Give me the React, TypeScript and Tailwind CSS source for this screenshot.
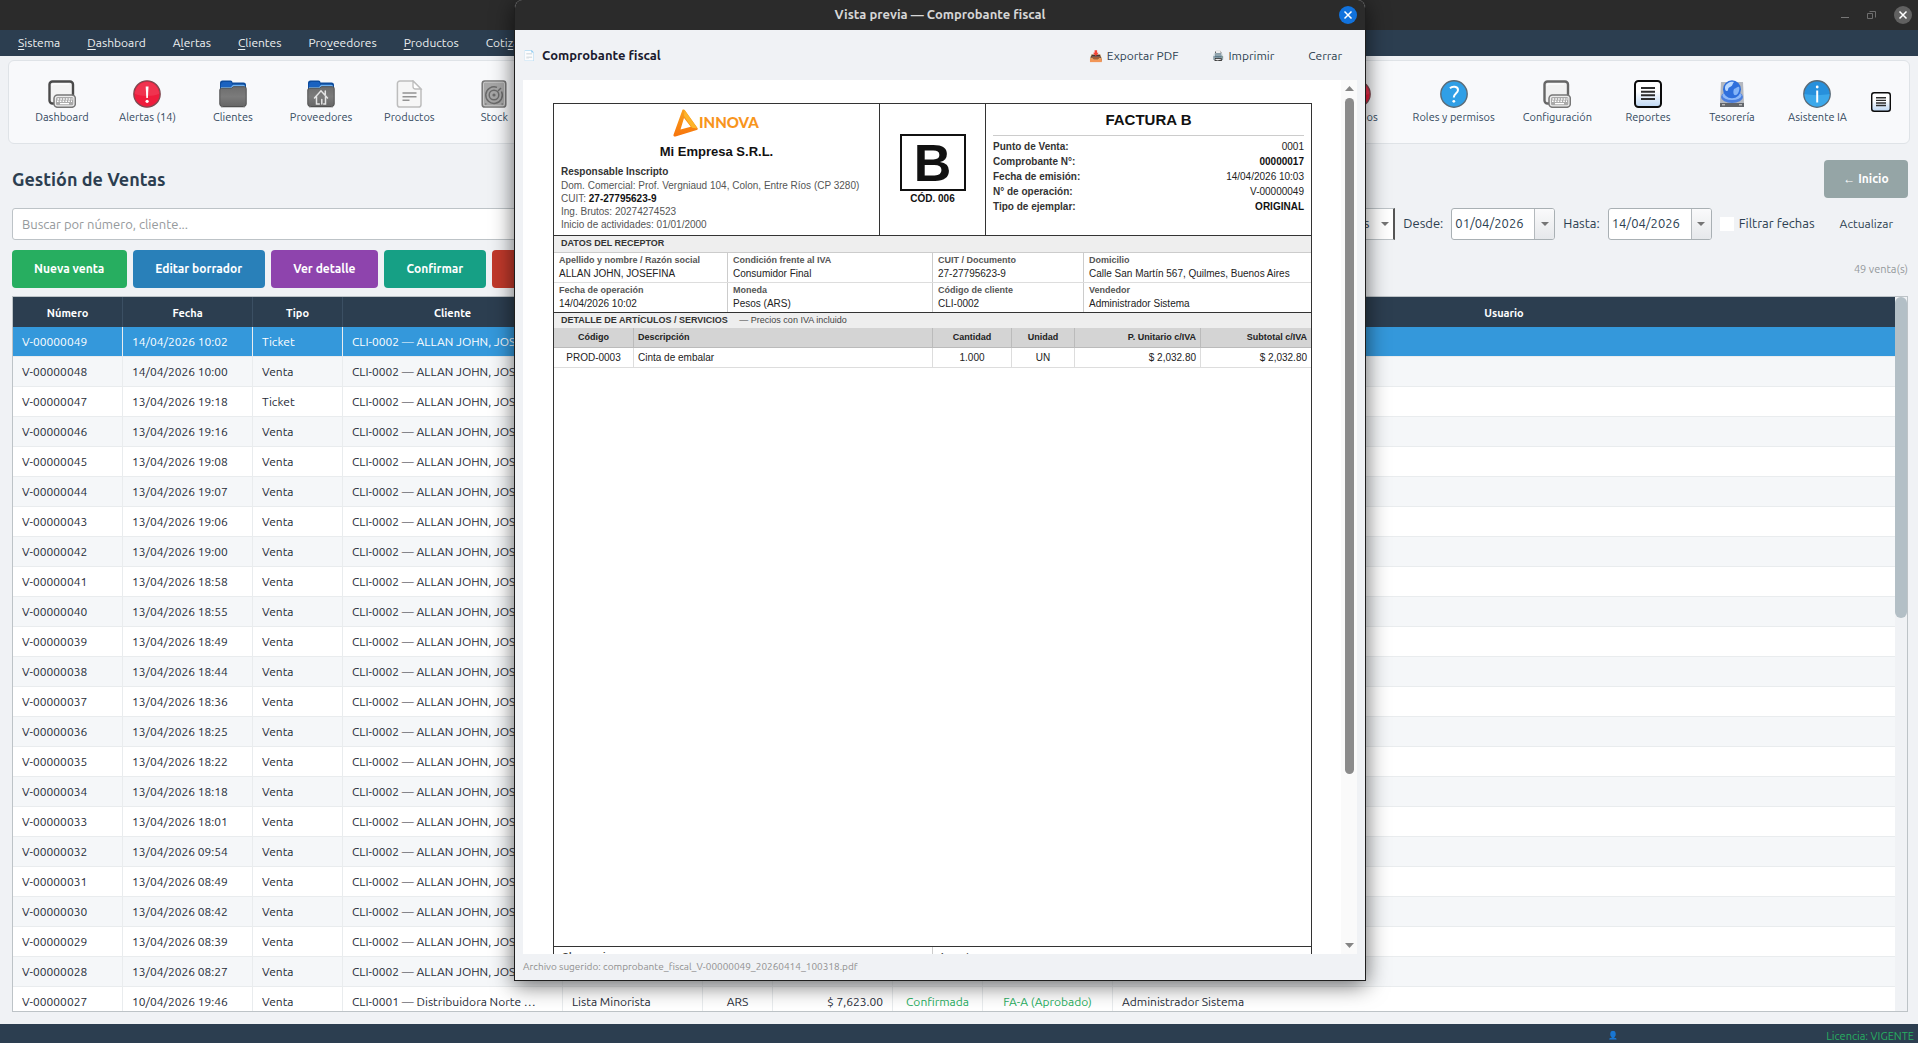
import type { ReactNode } from "react";

const MENU: [string, string, string][] = [
  ["", "S", "istema"],
  ["", "D", "ashboard"],
  ["A", "l", "ertas"],
  ["", "C", "lientes"],
  ["Pro", "v", "eedores"],
  ["", "P", "roductos"],
  ["Coti", "z", "aciones"],
];

function ScreenIcon({ dark, light }: { dark: string; light: string }) {
  return (
    <svg viewBox="0 0 28 28" className="size-7">
      <rect x="1.5" y="1.5" width="23.5" height="22" rx="3" fill={light} stroke={dark} strokeWidth="2.4" />
      <path d="M4 6a2 2 0 0 1 2-2h15" fill="none" stroke="#fff" strokeWidth="1" />
      <rect x="6" y="15" width="21.3" height="12.3" rx="3.5" fill="#ececec" stroke="#777" strokeWidth="1.5" />
      <rect x="8" y="17" width="17.3" height="8.3" rx="1.5" fill="#a9a9a9" />
      <path d="M9.5 19h15M9 21.2h15" stroke="#fff" strokeWidth="1.4" strokeDasharray="1.6 1.2" />
      <path d="M12 23.6h9" stroke="#fff" strokeWidth="1.3" />
    </svg>
  );
}

function AlertIcon() {
  return (
    <svg viewBox="0 0 28 28" className="size-7">
      <circle cx="14" cy="14" r="13.2" fill="#ef1c3c" stroke="#7d4a51" strokeWidth="1.3" />
      <path d="M2 14a12 12 0 0 1 24 0c-6 2.500-18 2.500-24 0z" fill="#fff" opacity="0.1" />
      <path d="M12.700 6.500h2.800l-.6 11.500h-1.600z" fill="#fff" />
      <circle cx="14.100" cy="21.300" r="1.600" fill="#fff" />
    </svg>
  );
}

function FolderIcon({ home }: { home?: boolean }) {
  return (
    <svg viewBox="0 0 28 28" className="size-7">
      <defs>
        <linearGradient id="folderBody" x1="0" y1="0" x2="0" y2="1">
          <stop offset="0" stopColor="#6d6d6d" />
          <stop offset="0.5" stopColor="#7b7b7b" />
          <stop offset="1" stopColor="#666" />
        </linearGradient>
      </defs>
      <path d="M1 8V3a2.500 2.500 0 0 1 2.500-2.500h8a2 2 0 0 1 2 2h11A2.500 2.500 0 0 1 27 5v6H1z" fill="#0d4c9e" />
      <path d="M2 7V4.500C2 3 3 2 4.500 2H12l1.500 2.500L12 7z" fill="#1a62c0" />
      <path d="M2 7h10l2-2.300h10.500A1.500 1.500 0 0 1 26 6.200V9H2z" fill="#6fb2f2" />
      <path d="M.8 10a1.800 1.800 0 0 1 1.800-1.800h10l1.800-1.500h11a1.800 1.800 0 0 1 1.800 1.800V24a2.500 2.500 0 0 1-2.500 2.500h-21.400A2.500 2.500 0 0 1 .8 24z" fill="url(#folderBody)" stroke="#505050" strokeWidth="1" />
      <path d="M2 27.400h24" stroke="#000" strokeWidth="0.8" opacity="0.25" />
      {home && (
        <path d="M7.500 18L14 10.800l6.500 7.200M9.500 16.500V24h2.800M18.500 16.500V24h-1.800M18.300 11v3.500M14.800 24v-4.500" fill="none" stroke="#e4e4e4" strokeWidth="1.500" strokeLinecap="round" />
      )}
    </svg>
  );
}

function DocumentIcon() {
  return (
    <svg viewBox="0 0 28 28" className="size-7">
      <path d="M5 .9h13L26 9v15.500a2.600 2.600 0 0 1-2.600 2.600H5a2.600 2.600 0 0 1-2.600-2.600v-21A2.600 2.600 0 0 1 5 .9z" fill="#f6f6f6" stroke="#bdbdbd" strokeWidth="1.500" />
      <path d="M18 1v5.500A2.500 2.500 0 0 0 20.500 9H26z" fill="#fff" stroke="#bdbdbd" strokeWidth="1.300" />
      <path d="M7.500 13h14M7.500 16.700h14M7.500 20.300h7" stroke="#939393" strokeWidth="1.600" />
    </svg>
  );
}

function DiskIcon() {
  return (
    <svg viewBox="0 0 28 28" className="size-7">
      <rect x="2.200" y=".9" width="23.600" height="26.200" rx="2.600" fill="#a6a6a6" stroke="#757575" strokeWidth="1.500" />
      <rect x="3.500" y="2.200" width="21" height="23.600" rx="1.600" fill="none" stroke="#cfcfcf" strokeWidth="0.800" />
      <path d="M21.500 11.500A8.300 8.300 0 1 1 17 7.400" fill="none" stroke="#6a6a6a" strokeWidth="1.500" />
      <circle cx="14" cy="15" r="4.800" fill="none" stroke="#6a6a6a" strokeWidth="1.500" />
      <circle cx="14" cy="15" r="1.600" fill="#6a6a6a" />
      <path d="M18 11l3-3" stroke="#6a6a6a" strokeWidth="1.500" />
      <path d="M5 24h1.500M21.500 24H23" stroke="#666" strokeWidth="1" />
    </svg>
  );
}

function HelpIcon() {
  return (
    <svg viewBox="0 0 28 28" className="size-7">
      <circle cx="14" cy="14" r="13.200" fill="#309fe6" stroke="#5b6b77" strokeWidth="1.400" />
      <path d="M10 8.200c2.200-2.200 8-2 8 1.800 0 3.200-4.200 3.400-4.200 7.600" fill="none" stroke="#fff" strokeWidth="2" />
      <circle cx="13.800" cy="21.300" r="1.400" fill="#fff" />
    </svg>
  );
}

function InfoIcon() {
  return (
    <svg viewBox="0 0 28 28" className="size-7">
      <circle cx="14" cy="14" r="13.200" fill="#2790dc" stroke="#5b6b77" strokeWidth="1.400" />
      <path d="M1.500 14a12.500 12.500 0 0 0 25 0c-7 1.500-18 1.500-25 0z" fill="#3ca8ea" />
      <path d="M14.200 10.500v12" stroke="#fff" strokeWidth="2" />
      <circle cx="14.200" cy="7" r="1.400" fill="#fff" />
    </svg>
  );
}

function ListIcon({ small }: { small?: boolean }) {
  return (
    <svg viewBox="0 0 28 28" className={small ? "size-5" : "size-7"}>
      <defs>
        <linearGradient id="listPaper" x1="0" y1="0" x2="0" y2="1">
          <stop offset="0.400" stopColor="#fff" />
          <stop offset="1" stopColor="#bcd6f3" />
        </linearGradient>
      </defs>
      <rect x="1" y="1" width="26" height="26" rx="3.500" fill="url(#listPaper)" stroke="#0b0b0b" strokeWidth="2" />
      <path d="M7 8h14M7 11.700h14M7 15.300h14M7 19h14" stroke="#2d2d2d" strokeWidth="2" />
    </svg>
  );
}

function TreasuryIcon() {
  return (
    <svg viewBox="0 0 28 28" className="size-7">
      <path d="M3 2h22l1 21H2z" fill="#b4b8bf" />
      <path d="M2 23h24v4H2z" fill="#63666b" />
      <path d="M4 24.800h3M21 24.800h3" stroke="#ddd" strokeWidth="1" />
      <ellipse cx="14" cy="17" rx="11" ry="6" fill="#4c7fdd" />
      <ellipse cx="14" cy="15.500" rx="9.500" ry="4.500" fill="#8db8f8" />
      <circle cx="14" cy="9.300" r="9" fill="#2f6fdc" />
      <path d="M7 7c1-4 6-6 9-5-2 2-1 4-4 5s-1 4-3 4-2-2-2-4z" fill="#b9d8ff" />
      <path d="M16 9c3-1 4-3 5-2s0 7-3 8-3-4-2-6z" fill="#84b4f8" />
    </svg>
  );
}

function ToolButton({ icon, label }: { icon: ReactNode; label: string }) {
  return (
    <button className="flex min-w-20 flex-col items-center gap-px px-3 text-[11px] leading-4 text-[#34495e]">
      {icon}
      {label}
    </button>
  );
}

function ArrowDown() {
  return (
    <svg viewBox="0 0 8 4" className="h-1 w-2">
      <path d="M0 0h8L4 4z" fill="#757575" />
    </svg>
  );
}

function DateField({ id, label, value }: { id: string; label: string; value: string }) {
  return (
    <div className="flex items-center gap-2">
      <label htmlFor={id}>{label}</label>
      <div className="flex h-8 w-26 overflow-hidden rounded-[3px] border border-[#a9b0b4] bg-white">
        <input id={id} defaultValue={value} className="min-w-0 flex-1 pl-[3px] outline-none" />
        <button aria-label={`Elegir fecha ${label}`} className="flex w-5 items-center justify-center border-l border-[#b4b9bd] bg-linear-to-b from-[#fafafb] to-[#e6e8eb]">
          <ArrowDown />
        </button>
      </div>
    </div>
  );
}

const ACTION = "h-[38px] rounded pr-[23px] pl-[22px] text-xs font-bold text-white";

const ALLAN = "CLI-0002 — ALLAN JOHN, JOSEFINA";
const SALES: [string, string, string][] = [
  ["49", "14/04/2026 10:02", "Ticket"],
  ["48", "14/04/2026 10:00", "Venta"],
  ["47", "13/04/2026 19:18", "Ticket"],
  ["46", "13/04/2026 19:16", "Venta"],
  ["45", "13/04/2026 19:08", "Venta"],
  ["44", "13/04/2026 19:07", "Venta"],
  ["43", "13/04/2026 19:06", "Venta"],
  ["42", "13/04/2026 19:00", "Venta"],
  ["41", "13/04/2026 18:58", "Venta"],
  ["40", "13/04/2026 18:55", "Venta"],
  ["39", "13/04/2026 18:49", "Venta"],
  ["38", "13/04/2026 18:44", "Venta"],
  ["37", "13/04/2026 18:36", "Venta"],
  ["36", "13/04/2026 18:25", "Venta"],
  ["35", "13/04/2026 18:22", "Venta"],
  ["34", "13/04/2026 18:18", "Venta"],
  ["33", "13/04/2026 18:01", "Venta"],
  ["32", "13/04/2026 09:54", "Venta"],
  ["31", "13/04/2026 08:49", "Venta"],
  ["30", "13/04/2026 08:42", "Venta"],
  ["29", "13/04/2026 08:39", "Venta"],
  ["28", "13/04/2026 08:27", "Venta"],
  ["27", "10/04/2026 19:46", "Venta"],
];
const SALE_HEADS = ["Número", "Fecha", "Tipo", "Cliente", "Lista", "Moneda", "Total", "Estado", "Fiscal", "Usuario"];

function SalesTable() {
  return (
    <div className="mt-2 flex min-h-0 flex-1 overflow-hidden border border-[#bdc3c7]">
      <div className="min-w-0 flex-1 overflow-hidden">
        <table className="w-full table-fixed border-separate border-spacing-0 text-xs text-[#1f2b37]">
          <colgroup>
            <col className="w-[110px]" />
            <col className="w-[130px]" />
            <col className="w-[90px]" />
            <col className="w-[220px]" />
            <col className="w-[140px]" />
            <col className="w-[70px]" />
            <col className="w-[120px]" />
            <col className="w-[90px]" />
            <col className="w-[130px]" />
            <col />
          </colgroup>
          <thead>
            <tr className="h-[30px] bg-[#2c3e50] text-[11px] text-white">
              {SALE_HEADS.map((h) => (
                <th key={h} className="border-r border-[#3b4f63] p-0 pt-[2px] text-center font-bold last:border-r-0">{h}</th>
              ))}
            </tr>
          </thead>
          <tbody>
            {SALES.map(([n, date, kind], i) => {
              const last = n === "27";
              const cells = last
                ? ["CLI-0001 — Distribuidora Norte …", "Lista Minorista", "ARS", "$ 7,623.00", "Confirmada", "FA-A (Aprobado)", "Administrador Sistema"]
                : [ALLAN, "", "", "", "", "", ""];
              const align = ["", "", "text-center", "text-right", "text-center text-[#27ae60]", "text-center text-[#27ae60]", ""];
              const cell = "truncate border-r border-b border-[#e9ecee] px-[9px] py-0 last:border-r-0 ";
              return (
                <tr key={n} className={i === 0 ? "h-[30px] bg-[#3498db] text-white" : i % 2 ? "h-[30px] bg-[#f5f7f9]" : "h-[30px] bg-white"}>
                  <td className={cell}>V-000000{n}</td>
                  <td className={cell}>{date}</td>
                  <td className={cell}>{kind}</td>
                  {cells.map((c, j) => (
                    <td key={j} className={cell + align[j]}>{c}</td>
                  ))}
                </tr>
              );
            })}
          </tbody>
        </table>
      </div>
      <div className="w-3 shrink-0 bg-[#f0f2f5]">
        <div className="h-[45%] rounded-md bg-[#b3bfc6]" />
      </div>
    </div>
  );
}

function InnovaLogo() {
  return (
    <svg viewBox="0 0 87 28" className="mx-auto h-7 w-[87px]">
      <defs>
        <linearGradient id="brand" x1="0" y1="0" x2="0" y2="1">
          <stop offset="0" stopColor="#f9a11b" />
          <stop offset="1" stopColor="#f7740c" />
        </linearGradient>
      </defs>
      <path fillRule="evenodd" d="M9.500.8c1-.6 2-.3 2.600.6L24.500 19c.5.900.2 1.700-.8 2L2.500 27.500c-1.500.3-2.300-.5-2-1.800zM11 9L7.500 20.500l10.300-2.800z" fill="url(#brand)" />
      <path d="M11.500 1L24.500 19.500l-5.500-.8L11 7z" fill="#fdb52a" />
      <text x="26" y="19" className="fill-[#f8951d] font-['Lato'] text-[15px] font-black">INNOVA</text>
    </svg>
  );
}

function Pair({ label, value, strong }: { label: string; value: string; strong?: boolean }) {
  return (
    <div className="flex justify-between leading-[15px]">
      <dt className="font-bold text-[#333]">{label}</dt>
      <dd className={strong ? "font-bold text-[#111]" : "text-[#222]"}>{value}</dd>
    </div>
  );
}

const RECEIVER: [string, string][][] = [
  [
    ["Apellido y nombre / Razón social", "ALLAN JOHN, JOSEFINA"],
    ["Condición frente al IVA", "Consumidor Final"],
    ["CUIT / Documento", "27-27795623-9"],
    ["Domicilio", "Calle San Martín 567, Quilmes, Buenos Aires"],
  ],
  [
    ["Fecha de operación", "14/04/2026 10:02"],
    ["Moneda", "Pesos (ARS)"],
    ["Código de cliente", "CLI-0002"],
    ["Vendedor", "Administrador Sistema"],
  ],
];

function Invoice() {
  const th = "border-r border-b border-[#bbb] px-1 py-0 last:border-r-0 ";
  const td = "border-r border-b border-[#ddd] px-1 py-0 last:border-r-0 ";
  return (
    <article className="flex flex-1 flex-col border-x border-t border-[#333] font-['Liberation_Sans',Arial,sans-serif] text-[10px] text-[#222]">
      <header className="flex h-[132px] border-b border-[#333]">
        <div className="flex-1 border-r border-[#333] px-[7px] pt-[5px]">
          <InnovaLogo />
          <h2 className="mt-[6px] text-center text-[13px] leading-[18px] font-bold text-[#111]">Mi Empresa S.R.L.</h2>
          <div className="mt-[4px] leading-[13px] text-[#555]">
            <p className="mb-px font-bold text-[#333]">Responsable Inscripto</p>
            <p>Dom. Comercial: Prof. Vergniaud 104, Colon, Entre Ríos (CP 3280)</p>
            <p>CUIT: <b className="text-[#111]">27-27795623-9</b></p>
            <p>Ing. Brutos: 20274274523</p>
            <p>Inicio de actividades: 01/01/2000</p>
          </div>
        </div>
        <div className="flex w-[106px] flex-col items-center border-r border-[#333] pt-[30px] text-[#111]">
          <div className="flex h-[57px] w-[66px] items-center justify-center border-2 border-[#111] text-[52px] leading-none font-bold">B</div>
          <p className="mt-px leading-[13px] font-bold">CÓD. 006</p>
        </div>
        <div className="w-[325px] px-[7px]">
          <h2 className="mb-[3px] border-b border-[#ccc] pt-[7px] pb-[6px] text-center text-[15px] leading-[18px] font-bold text-[#111]">FACTURA B</h2>
          <dl>
            <Pair label="Punto de Venta:" value="0001" />
            <Pair label="Comprobante N°:" value="00000017" strong />
            <Pair label="Fecha de emisión:" value="14/04/2026 10:03" />
            <Pair label="N° de operación:" value="V-00000049" />
            <Pair label="Tipo de ejemplar:" value="ORIGINAL" strong />
          </dl>
        </div>
      </header>
      <h3 className="h-[17px] border-b border-[#ccc] bg-[#eee] px-[7px] text-[9px] leading-[14px] font-bold text-[#333]">DATOS DEL RECEPTOR</h3>
      <div className="border-b border-[#333]">
        {RECEIVER.map((row, r) => (
          <dl key={r} className="grid h-[30px] grid-cols-[174px_205px_151px_1fr] border-b border-[#ddd] last:h-[29px] last:border-b-0">
            {row.map(([k, v]) => (
              <div key={k} className="border-r border-[#ccc] px-[5px] last:border-r-0">
                <dt className="text-[9px] leading-[14px] font-bold text-[#555]">{k}</dt>
                <dd className="leading-[14px] whitespace-nowrap">{v}</dd>
              </div>
            ))}
          </dl>
        ))}
      </div>
      <h3 className="h-[15px] bg-[#eee] px-[7px] text-[9px] leading-[14px] font-bold text-[#333]">
        DETALLE DE ARTÍCULOS / SERVICIOS <span className="ml-[9px] font-normal text-[#444]">— Precios con IVA incluido</span>
      </h3>
      <table className="w-full table-fixed border-separate border-spacing-0">
        <colgroup>
          <col className="w-[80px]" />
          <col />
          <col className="w-[79px]" />
          <col className="w-[63px]" />
          <col className="w-[126px]" />
          <col className="w-[110px]" />
        </colgroup>
        <thead>
          <tr className="h-5 bg-[#d4d4d4] text-[9px] text-[#222]">
            <th className={th + "text-center"}>Código</th>
            <th className={th + "text-left"}>Descripción</th>
            <th className={th + "text-center"}>Cantidad</th>
            <th className={th + "text-center"}>Unidad</th>
            <th className={th + "text-right"}>P. Unitario c/IVA</th>
            <th className={th + "text-right"}>Subtotal c/IVA</th>
          </tr>
        </thead>
        <tbody>
          <tr className="h-5">
            <td className={td + "text-center"}>PROD-0003</td>
            <td className={td}>Cinta de embalar</td>
            <td className={td + "text-center"}>1.000</td>
            <td className={td + "text-center"}>UN</td>
            <td className={td + "text-right"}>$ 2,032.80</td>
            <td className={td + "text-right"}>$ 2,032.80</td>
          </tr>
        </tbody>
      </table>
      <footer className="mt-auto flex h-2 overflow-hidden border-t border-[#333] text-[9px] leading-[14px] font-bold text-[#444]">
        <p className="w-[379px] border-r border-[#ccc] px-2 pt-[2px]">Observaciones</p>
        <p className="flex-1 px-2 pt-[2px]">Importe</p>
      </footer>
    </article>
  );
}

function PreviewDialog() {
  return (
    <div role="dialog" aria-label="Comprobante fiscal" className="absolute top-0 bottom-[62px] left-[514px] flex w-[852px] flex-col overflow-hidden rounded-t-lg border-x border-b border-[#1e1e1e] bg-[#f0f2f5] shadow-[0_4px_22px_rgba(0,0,0,0.6)]">
      <div className="flex h-[30px] shrink-0 items-center bg-[#2b2b2b] pr-2 pb-px">
        <span className="w-[26px]" />
        <h1 className="flex-1 text-center text-[13px] font-bold text-[#d6d6d6]">Vista previa — Comprobante fiscal</h1>
        <button aria-label="Cerrar ventana" className="flex size-[18px] items-center justify-center rounded-full bg-[#1172dd]">
          <svg viewBox="0 0 10 10" className="size-[10px]"><path d="M1.500 1.500l7 7M8.500 1.500l-7 7" stroke="#fff" strokeWidth="1.500" /></svg>
        </button>
      </div>
      <div className="flex h-[50px] shrink-0 items-center pt-[2px] pr-[23px] pl-2 text-xs text-[#2c3e50]">
        <h2 className="flex flex-1 items-center gap-[6px] text-[13px] font-bold text-[#1a1a2e]">
          <span className="w-[13px] text-[10px] opacity-80">📄</span>Comprobante fiscal
        </h2>
        <div className="flex gap-[34px]">
          <button className="flex items-center gap-1"><span className="text-[11px]">📥</span>Exportar PDF</button>
          <button className="flex items-center gap-1"><span className="text-[10px]">🖨️</span>Imprimir</button>
          <button>Cerrar</button>
        </div>
      </div>
      <div className="mx-2 flex min-h-0 flex-1 overflow-hidden bg-white">
        <div className="flex flex-1 flex-col pt-[23px] pr-[29px] pl-[30px]">
          <Invoice />
        </div>
        <div className="flex w-4 shrink-0 flex-col items-center bg-[#fafafa] py-[6px]">
          <svg viewBox="0 0 9 5" className="h-[5px] w-[9px]"><path d="M0 5h9L4.500 0z" fill="#858585" /></svg>
          <div className="mt-[7px] w-[9px] grow-4 rounded-full bg-[#8b8b8b]" />
          <div className="grow" />
          <svg viewBox="0 0 9 5" className="h-[5px] w-[9px]"><path d="M0 0h9L4.500 5z" fill="#858585" /></svg>
        </div>
      </div>
      <p className="h-[26px] shrink-0 px-2 text-[10px] leading-[26px] text-[#8f8f8f]">Archivo sugerido: comprobante_fiscal_V-00000049_20260414_100318.pdf</p>
    </div>
  );
}

export default function App() {
  return (
    <div className="relative flex h-screen flex-col overflow-hidden bg-[#f0f2f5] font-['Ubuntu','Noto_Sans',sans-serif] text-[13px] text-[#2c3e50]">
      <div className="flex h-[30px] shrink-0 items-center justify-end gap-[18px] bg-[#2b2b2b] pr-[6px]">
        <button aria-label="Minimizar" className="mt-1 h-px w-2 bg-[#777]" />
        <button aria-label="Restaurar">
          <svg viewBox="0 0 9 9" className="size-[9px]"><path d="M.5 2.500h5v5h-5zM2.500.5h6v6" fill="none" stroke="#6e6e6e" /></svg>
        </button>
        <button aria-label="Cerrar" className="flex size-[18px] items-center justify-center rounded-full bg-[#616161]">
          <svg viewBox="0 0 10 10" className="size-[10px]"><path d="M1.500 1.500l7 7M8.500 1.500l-7 7" stroke="#fff" strokeWidth="1.500" /></svg>
        </button>
      </div>
      <nav className="flex h-[26px] shrink-0 items-center gap-[27px] bg-[#2c3e50] pl-[18px] text-xs text-[#ecf0f1]">
        {MENU.map(([a, key, b]) => (
          <button key={key + b}>{a}<span className="underline underline-offset-2">{key}</span>{b}</button>
        ))}
      </nav>
      <div className="mx-2 mt-1 flex h-[84px] shrink-0 items-center justify-between rounded-md border border-[#dfe3e7] bg-[#f8f9fb] px-3">
        <div className="flex gap-[5px] pl-px">
          <ToolButton icon={<ScreenIcon dark="#4a4a4a" light="#f3f3f3" />} label="Dashboard" />
          <ToolButton icon={<AlertIcon />} label="Alertas (14)" />
          <ToolButton icon={<FolderIcon />} label="Clientes" />
          <ToolButton icon={<FolderIcon home />} label="Proveedores" />
          <ToolButton icon={<DocumentIcon />} label="Productos" />
          <ToolButton icon={<DiskIcon />} label="Stock" />
        </div>
        <div className="flex items-center gap-1 pr-[6px]">
          <ToolButton icon={<AlertIcon />} label="Usuarios" />
          <ToolButton icon={<HelpIcon />} label="Roles y permisos" />
          <ToolButton icon={<ScreenIcon dark="#666" light="#f1f1f1" />} label="Configuración" />
          <ToolButton icon={<ListIcon />} label="Reportes" />
          <ToolButton icon={<TreasuryIcon />} label="Tesorería" />
          <ToolButton icon={<InfoIcon />} label="Asistente IA" />
          <button aria-label="Más" className="ml-2"><ListIcon small /></button>
        </div>
      </div>
      <main className="flex min-h-0 flex-1 flex-col px-[10px] pt-4 pb-3 pl-3">
        <div className="flex items-center justify-between">
          <h1 className="text-lg font-bold">Gestión de Ventas</h1>
          <button className="h-[38px] w-[84px] rounded bg-[#95a5a6] text-xs font-bold text-white">← Inicio</button>
        </div>
        <div className="mt-[10px] flex h-8 items-center gap-2">
          <input aria-label="Buscar" placeholder="Buscar por número, cliente..." className="h-8 min-w-0 flex-1 rounded-[3px] border border-[#bdc3c7] bg-white px-[9px] placeholder:text-[#95999c]" />
          <select aria-label="Estado" className="h-8 w-[140px] appearance-none border border-r-2 border-[#bdc3c7] border-r-[#555] bg-white pl-[10px]">
            <option>Todos los estados</option>
          </select>
          <span className="pointer-events-none -ml-[22px] w-[14px]"><ArrowDown /></span>
          <DateField id="desde" label="Desde:" value="01/04/2026" />
          <DateField id="hasta" label="Hasta:" value="14/04/2026" />
          <label className="flex items-center gap-[5px]">
            <input type="checkbox" className="size-[14px] appearance-none bg-white" />
            Filtrar fechas
          </label>
          <button className="pr-[15px] pl-[17px] text-xs">Actualizar</button>
        </div>
        <div className="mt-[10px] flex items-center gap-[6px]">
          <button className={ACTION + " bg-[#27ae60]"}>Nueva venta</button>
          <button className={ACTION + " bg-[#2980b9]"}>Editar borrador</button>
          <button className={ACTION + " bg-[#8e44ad]"}>Ver detalle</button>
          <button className={ACTION + " bg-[#16a085]"}>Confirmar</button>
          <button className={ACTION + " bg-[#c0392b]"}>Anular</button>
          <span className="ml-auto text-[11px] text-[#95999c]">49 venta(s)</span>
        </div>
        <SalesTable />
      </main>
      <footer className="flex h-[19px] shrink-0 items-center justify-end bg-[#2c3e50] pt-[5px] pr-1 text-[11px] text-[#27ae60]">
        <span className="mr-[208px] text-[8px]">👤</span>
        <span>Licencia: VIGENTE</span>
      </footer>
      <PreviewDialog />
    </div>
  );
}
